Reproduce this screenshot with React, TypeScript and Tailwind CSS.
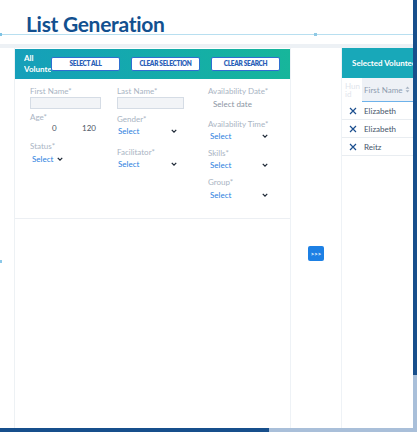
import React from "react";

const label = "text-[8px] leading-[10px] text-[#a9b4c3]";
const selectText = "text-[8px] leading-[10px] text-[#2c7fe0]";

function Chevron() {
  return (
    <svg viewBox="0 0 8 5" className="h-[4px] w-[6px]" aria-hidden="true">
      <path d="M1 1l3 3 3-3" fill="none" stroke="#1f2937" strokeWidth="1.7" />
    </svg>
  );
}

function SelectRow({ width, className }: { width: string; className?: string }) {
  return (
    <div className={`flex items-center justify-between ${width} ${className ?? ""}`}>
      <span className={selectText}>Select</span>
      <Chevron />
    </div>
  );
}

function HeaderButton({ children }: { children: React.ReactNode }) {
  return (
    <button className="relative flex h-[14px] w-[69px] items-center justify-center rounded-[2px] border-[1.5px] border-[#2f6fd0] bg-white text-[6.5px] font-extrabold leading-none tracking-[-0.3px] text-[#2a5fb8]">
      {children}
    </button>
  );
}

function XIcon() {
  return (
    <svg viewBox="0 0 8 8" className="h-[8px] w-[8px]" aria-hidden="true">
      <path d="M1 1l6 6M7 1L1 7" stroke="#1c4f8f" strokeWidth="1.2" />
    </svg>
  );
}

export default function App() {
  const selected = ["Elizabeth", "Elizabeth", "Reitz"];

  return (
    <div className="flex h-[432px] w-[417px] flex-col overflow-hidden bg-white font-['Lato',sans-serif]">
      <div className="flex min-h-0 flex-1">
        <div className="flex w-[413px] flex-col">
          {/* title */}
          <div className="h-[34px] pl-[26px] pt-[12px]">
            <h1 className="text-[21px] font-bold leading-[24px] tracking-[-0.3px] text-[#12508f]">
              List Generation
            </h1>
          </div>
          <div className="relative h-[1px] bg-[#b8dff0]">
            <span className="absolute left-0 top-[-1px] h-[3px] w-[2px] bg-[#7ec3e4]" />
            <span className="absolute left-[314px] top-[-1px] h-[3px] w-[3px] bg-[#8fc9e4]" />
          </div>
          <div className="h-[9px]" />
          <div className="h-[4px] bg-[#edf1f5]" />

          {/* body */}
          <div className="flex min-h-0 flex-1">
            <div className="relative w-[14px]">
              <span className="absolute left-0 top-[212px] h-[3px] w-[2px] bg-[#8cc8e8]" />
            </div>

            {/* all volunteers panel */}
            <div className="flex w-[276px] flex-col border-l border-[#edf1f4]">
              <div className="mt-[1px] flex h-[30px] items-center bg-gradient-to-r from-[#169fba] to-[#17b69b] pl-[9px]">
                <div className="w-[27px] overflow-hidden text-[8px] font-bold leading-[11px] text-white">
                  <div>All</div>
                  <div className="whitespace-nowrap">Volunteers</div>
                </div>
                <div className="flex gap-[11px]">
                  <HeaderButton>SELECT ALL</HeaderButton>
                  <HeaderButton>CLEAR SELECTION</HeaderButton>
                  <HeaderButton>CLEAR SEARCH</HeaderButton>
                </div>
              </div>

              <div className="flex h-[140px] border-b border-[#eceff3] pl-[15px]">
                {/* column 1 */}
                <div className="flex w-[87px] flex-col">
                  <span className={`${label} mt-[7px]`}>First Name*</span>
                  <div className="mt-[1px] h-[12px] w-[71px] border border-[#d5dce5] bg-[#f2f4f7]" />
                  <span className={`${label} mt-[3px]`}>Age*</span>
                  <div className="mt-[1px] flex w-[66px] justify-between pl-[22px] text-[8px] leading-[10px] text-[#4b5563]">
                    <span>0</span>
                    <span>120</span>
                  </div>
                  <span className={`${label} mt-[8px]`}>Status*</span>
                  <SelectRow width="w-[33px]" className="mt-[3px] pl-[2px]" />
                </div>

                {/* column 2 */}
                <div className="flex w-[91px] flex-col">
                  <span className={`${label} mt-[7px]`}>Last Name*</span>
                  <div className="mt-[1px] h-[12px] w-[67px] border border-[#d5dce5] bg-[#f2f4f7]" />
                  <span className={`${label} mt-[5px]`}>Gender*</span>
                  <SelectRow width="w-[60px]" className="mt-[2px] pl-[1px]" />
                  <span className={`${label} mt-[11px]`}>Facilitator*</span>
                  <SelectRow width="w-[60px]" className="mt-[2px] pl-[1px]" />
                </div>

                {/* column 3 */}
                <div className="flex flex-1 flex-col">
                  <span className={`${label} mt-[7px]`}>Availability Date*</span>
                  <span className="mt-[3px] pl-[5px] text-[8px] leading-[10px] text-[#8a94a3]">
                    Select date
                  </span>
                  <span className={`${label} mt-[10px]`}>Availability Time*</span>
                  <SelectRow width="w-[60px]" className="mt-[2px] pl-[2px]" />
                  <span className={`${label} mt-[7px]`}>Skills*</span>
                  <SelectRow width="w-[60px]" className="mt-[2px] pl-[2px]" />
                  <span className={`${label} mt-[7px]`}>Group*</span>
                  <SelectRow width="w-[60px]" className="mt-[3px] pl-[2px]" />
                </div>
              </div>
              <div className="flex-1" />
            </div>

            {/* transfer column */}
            <div className="flex w-[52px] flex-col items-center border-x border-[#eef2f6] pt-[198px]">
              <button className="flex h-[15px] w-[16px] items-center justify-center rounded-[2px] bg-[#1d80e4] text-[6px] font-bold leading-none text-white">
                &gt;&gt;&gt;
              </button>
            </div>

            {/* selected volunteers panel */}
            <div className="flex flex-1 flex-col overflow-hidden">
              <div className="flex h-[30px] items-center bg-[#18a8b9] pl-[10px]">
                <span className="whitespace-nowrap text-[8px] font-bold text-white">
                  Selected Volunteers
                </span>
              </div>
              <div className="flex h-[24px]">
                <div className="w-[20px] overflow-hidden pl-[3px] pt-[4px] text-[8px] leading-[8px] text-[#dfe5ec]">
                  <div>Hun</div>
                  <div>id</div>
                </div>
                <div className="flex flex-1 items-center border-b border-[#6db2ea] bg-[#eef1f6] pl-[2px]">
                  <span className="whitespace-nowrap text-[8px] text-[#8e9db0]">First Name</span>
                  <svg viewBox="0 0 6 9" className="ml-[3px] h-[7px] w-[5px]" aria-hidden="true">
                    <path d="M3 0.5L5.5 3.5H0.5Z M3 8.5L5.5 5.5H0.5Z" fill="#a7b3c2" />
                  </svg>
                </div>
              </div>
              {selected.map((name, i) => (
                <div
                  key={i}
                  className="flex h-[18px] items-center border-b border-[#e9edf1] pl-[7px]"
                >
                  <XIcon />
                  <span className="ml-[7px] text-[8px] text-[#46556a]">{name}</span>
                </div>
              ))}
            </div>
          </div>
        </div>

        {/* vertical scrollbar */}
        <div className="flex w-[4px] flex-col">
          <div className="h-[375px] bg-[#174f8c]" />
          <div className="flex-1 bg-[#a9bfd9]" />
        </div>
      </div>

      {/* horizontal scrollbar */}
      <div className="flex h-[4px]">
        <div className="w-[269px] bg-[#174f8c]" />
        <div className="flex-1 bg-[#a9bfd9]" />
      </div>
    </div>
  );
}
